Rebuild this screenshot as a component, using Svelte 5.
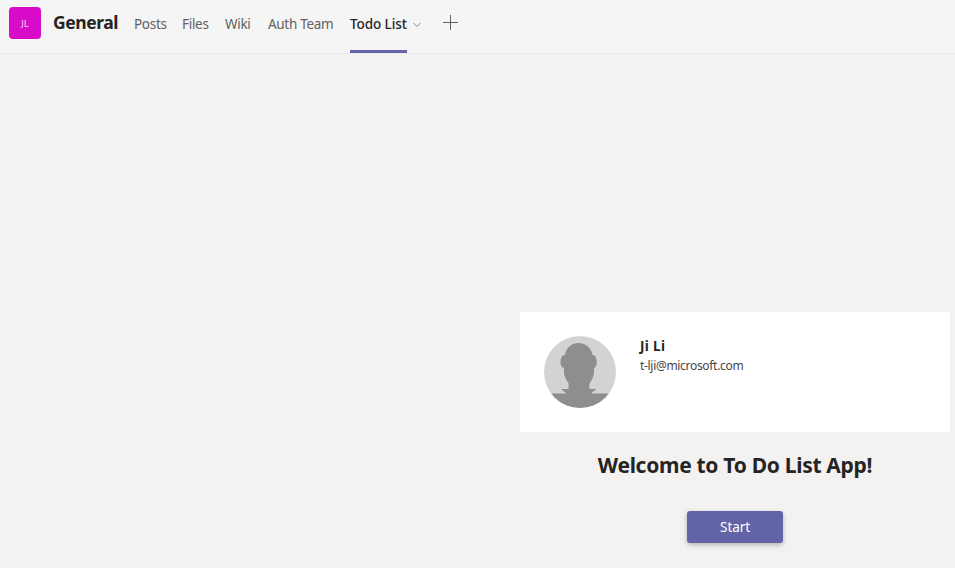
<script>
  const tabs = [
    { name: 'Posts', width: 32 },
    { name: 'Files', width: 27 },
    { name: 'Wiki', width: 27 },
    { name: 'Auth Team', width: 66 },
    { name: 'Todo List', width: 57, active: true }
  ];
</script>

<div class="app">
  <header>
    <div class="team">JL</div>
    <h1>General</h1>
    <nav>
      {#each tabs as tab}
        <a class="tab" class:active={tab.active} style:width="{tab.width}px">{tab.name}</a>
      {/each}
    </nav>
    <svg class="chevron" width="10" height="6" viewBox="0 0 10 6"><path d="M1.500 1 5 4.500 8.500 1" /></svg>
    <svg class="plus" width="16" height="16" viewBox="0 0 16 16"><path d="M7.500 0v15M0 7.500h15" /></svg>
  </header>
  <main>
    <section class="card">
      <svg class="avatar" width="72" height="72" viewBox="0 0 72 72">
        <defs><clipPath id="round"><circle cx="36" cy="36" r="36" /></clipPath></defs>
        <g clip-path="url(#round)">
          <rect width="72" height="72" fill="#d3d3d3" />
          <path fill="#8e8e8e" d="M34.500 7C42 7 47.500 12 48.500 19C51 19 52.800 21.500 52.800 26C52.800 29.500 51.500 31.800 50 31.800C50.500 39 48.500 43.500 45.500 47.500V53H52.500L47 57.500H72V72H0V57.500H22.500L17 53H24.500V47C21.500 43 19.500 39 20 31.800C18 31.800 16.500 29.500 16.500 26C16.500 21.500 18.500 19 21 19C22 12 27 7 34.500 7Z" />
        </g>
      </svg>
      <div class="who">
        <strong>Ji Li</strong>
        <span>t-lji@microsoft.com</span>
      </div>
    </section>
    <h2>Welcome to To Do List App!</h2>
    <button>Start</button>
  </main>
</div>

<style>
  :global(body) { background: #f3f2f1; }
  .app {
    height: 568px;
    overflow: hidden;
    color: #252423;
    font-family: "Segoe UI", "Noto Sans", "Open Sans", sans-serif;
  }
  header {
    box-sizing: border-box;
    height: 54px;
    display: flex;
    align-items: flex-start;
    padding-left: 9px;
    background: #f5f5f5;
    border-bottom: 1px solid #e9e8e7;
  }
  .team {
    width: 32px;
    height: 32px;
    margin-top: 7px;
    border-radius: 4px;
    background: #d80cc8;
    color: #f9d5f6;
    font-size: 9.500px;
    line-height: 33px;
    text-align: center;
  }
  h1 {
    width: 65px;
    margin: 10px 16px 0 12px;
    font-size: 17.500px;
    line-height: 25px;
    font-weight: 700;
    letter-spacing: -0.450px;
    white-space: nowrap;
  }
  nav { display: flex; gap: 16px; }
  .tab {
    box-sizing: border-box;
    height: 53px;
    padding-top: 14px;
    color: #616161;
    font-size: 13.500px;
    line-height: 20px;
    letter-spacing: -0.300px;
    white-space: nowrap;
  }
  .active {
    color: #252423;
    font-weight: 500;
    letter-spacing: -0.100px;
    border-bottom: 3px solid #6264a7;
  }
  svg { flex: none; }
  .chevron { margin: 22px 0 0 5px; fill: none; stroke: #8b8a89; }
  .plus { margin: 15px 0 0 21px; fill: none; stroke: #616161; }
  main {
    width: 430px;
    margin: 258px 0 0 520px;
    display: flex;
    flex-direction: column;
    align-items: center;
  }
  .card {
    box-sizing: border-box;
    width: 430px;
    height: 120px;
    padding: 24px;
    display: flex;
    gap: 24px;
    background: #fff;
  }
  .who { display: flex; flex-direction: column; white-space: nowrap; }
  strong { font-size: 13.500px; line-height: 20px; letter-spacing: 0.350px; }
  .who span { font-size: 12px; line-height: 20px; letter-spacing: -0.310px; color: #484644; }
  h2 {
    margin: 17px 0 0;
    font-size: 21px;
    line-height: 32px;
    font-weight: 700;
    letter-spacing: -0.300px;
    white-space: nowrap;
  }
  button {
    width: 96px;
    height: 32px;
    margin-top: 30px;
    padding: 0;
    border: 0;
    border-radius: 3px;
    background: #6264a7;
    color: #fff;
    font: 13.500px/32px "Segoe UI", "Noto Sans", "Open Sans", sans-serif;
    letter-spacing: -0.100px;
    box-shadow: 0 2px 5px rgba(0, 0, 0, 0.25);
  }
</style>
